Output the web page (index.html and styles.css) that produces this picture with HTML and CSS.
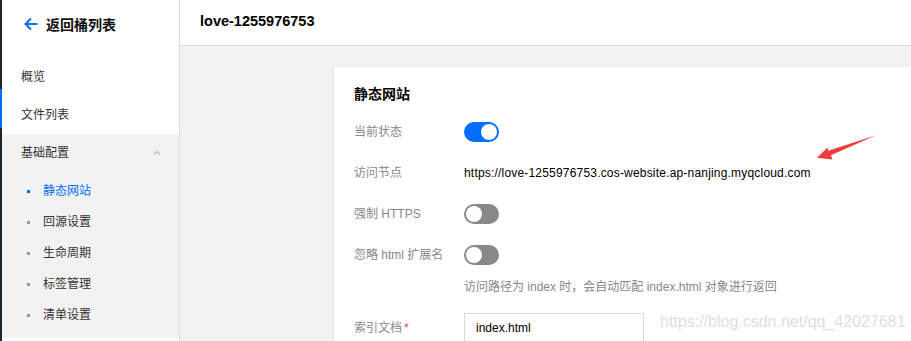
FILE: index.html
```html
<!DOCTYPE html>
<html lang="zh-CN">
<head>
<meta charset="utf-8">
<link rel="stylesheet" href="styles.css">
</head>
<body>
<div class="app">
  <div class="rail"><div class="rail-active"></div></div>
  <aside class="sidebar">
    <div class="back">
      <svg class="back-icon" width="16" height="16" viewBox="0 0 16 16"><path d="M14.5 8H2.5M8 2.5L2.5 8L8 13.5" fill="none" stroke="#006eff" stroke-width="2"/></svg>
      <span>返回桶列表</span>
    </div>
    <nav class="menu">
      <div class="menu-item">概览</div>
      <div class="menu-item">文件列表</div>
      <div class="group">
        <div class="menu-item group-title">基础配置
          <svg class="caret" width="8" height="5" viewBox="0 0 8 5"><path d="M1 4.5L4 1.5L7 4.5" fill="none" stroke="#bbb" stroke-width="1.3"/></svg>
        </div>
        <div class="sub">
          <div class="sub-item active"><i class="dot"></i>静态网站</div>
          <div class="sub-item"><i class="dot"></i>回源设置</div>
          <div class="sub-item"><i class="dot"></i>生命周期</div>
          <div class="sub-item"><i class="dot"></i>标签管理</div>
          <div class="sub-item"><i class="dot"></i>清单设置</div>
        </div>
      </div>
    </nav>
  </aside>
  <main class="main">
    <header class="header">love-1255976753</header>
    <section class="content">
      <div class="card">
        <h3 class="card-title">静态网站</h3>
        <div class="row">
          <label class="label">当前状态</label>
          <span class="switch on"><i></i></span>
        </div>
        <div class="row">
          <label class="label">访问节点</label>
          <span class="value">https://love-1255976753.cos-website.ap-nanjing.myqcloud.com</span>
        </div>
        <div class="row">
          <label class="label">强制 HTTPS</label>
          <span class="switch"><i></i></span>
        </div>
        <div class="row tight">
          <label class="label">忽略 html 扩展名</label>
          <span class="switch"><i></i></span>
        </div>
        <div class="help">访问路径为 index 时，会自动匹配 index.html 对象进行返回</div>
        <div class="row top">
          <label class="label">索引文档<em class="req">*</em></label>
          <div class="input">index.html</div>
        </div>
      </div>
    </section>
  </main>
  <svg class="annot" width="70" height="32" viewBox="0 0 70 32">
    <path d="M1 27.7 L11.5 17.5 L12.3 20.8 L60 5.3 L14.8 25.2 L16.5 29.6 Z" fill="#f33b3b"/>
  </svg>
  <div class="watermark">https://blog.csdn.net/qq_42027681</div>
</div>
</body>
</html>
```

FILE: styles.css
```css
* { box-sizing: border-box; }
html, body { margin: 0; padding: 0; }
body {
  font-family: "Liberation Sans", "Noto Sans CJK SC", sans-serif;
  font-size: 12px;
  color: #333;
  background: #f2f2f2;
  overflow: hidden;
}
.app {
  position: relative;
  display: flex;
  width: 911px;
  height: 341px;
}
.rail {
  width: 2px;
  flex: none;
  background: #1f232e;
  padding-top: 89px;
}
.rail-active {
  height: 39px;
  background: #006eff;
}
.sidebar {
  width: 178px;
  flex: none;
  background: #fff;
  border-right: 1px solid #dcdcdc;
}
.back {
  height: 48px;
  display: flex;
  align-items: center;
  padding-left: 21px;
  font-size: 14px;
  font-weight: bold;
  color: #111;
}
.back-icon { margin-right: 7px; }
.menu { padding-top: 10px; }
.menu-item {
  height: 38px;
  line-height: 38px;
  padding-left: 19px;
  color: #333;
}
.group {
  background: #f2f2f2;
  padding-bottom: 9px;
}
.group-title {
  display: flex;
  align-items: center;
  justify-content: space-between;
  padding-right: 18px;
}
.caret { margin-top: -2px; }
.sub { padding-top: 2px; }
.sub-item {
  height: 31px;
  display: flex;
  align-items: center;
  padding-left: 25px;
  color: #333;
}
.sub-item .dot {
  width: 3px;
  height: 3px;
  background: #999;
  margin-right: 13px;
  margin-top: 3px;
}
.sub-item.active { color: #006eff; }
.sub-item.active .dot { background: #006eff; }
.main {
  flex: 1;
  display: flex;
  flex-direction: column;
  min-width: 0;
}
.header {
  height: 46px;
  flex: none;
  background: #fff;
  border-bottom: 1px solid #dcdcdc;
  padding: 12px 0 0 20px;
  font-size: 14.5px;
  font-weight: bold;
  color: #000;
  line-height: 18px;
}
.content {
  flex: 1;
  padding: 21px 0 0 154px;
  overflow: hidden;
}
.card {
  background: #fff;
  width: 700px;
  height: 300px;
  padding: 17px 20px 0;
  box-shadow: -1px 0 2px rgba(0,0,0,0.06);
}
.card-title {
  margin: 0 0 18px;
  font-size: 14px;
  font-weight: bold;
  line-height: 20px;
  color: #000;
}
.row {
  display: flex;
  align-items: center;
  height: 20px;
  margin-bottom: 21px;
}
.row.tight { margin-bottom: 12px; }
.row.top { align-items: flex-start; height: 30px; }
.row.top .label { padding-top: 5px; }
.label {
  width: 110px;
  flex: none;
  color: #888;
  line-height: 20px;
}
.req { color: #e54545; font-style: normal; margin-left: 2px; }
.value { color: #000; letter-spacing: 0.19px; }
.switch {
  width: 35px;
  height: 20px;
  border-radius: 10px;
  background: #888;
  position: relative;
  display: inline-block;
}
.switch i {
  position: absolute;
  top: 2px;
  left: 2px;
  width: 16px;
  height: 16px;
  border-radius: 50%;
  background: #fff;
}
.switch.on { background: #006eff; }
.switch.on i { left: 17px; }
.help {
  margin-left: 110px;
  color: #888;
  line-height: 20px;
  margin-bottom: 16px;
}
.input {
  width: 180px;
  height: 30px;
  border: 1px solid #dcdcdc;
  padding: 0 11px;
  line-height: 28px;
  color: #000;
  border-bottom: none;
}
.annot {
  position: absolute;
  left: 816px;
  top: 130px;
}
.watermark {
  position: absolute;
  left: 660px;
  top: 312px;
  font-size: 16px;
  color: #dedede;
  line-height: 20px;
}
```
